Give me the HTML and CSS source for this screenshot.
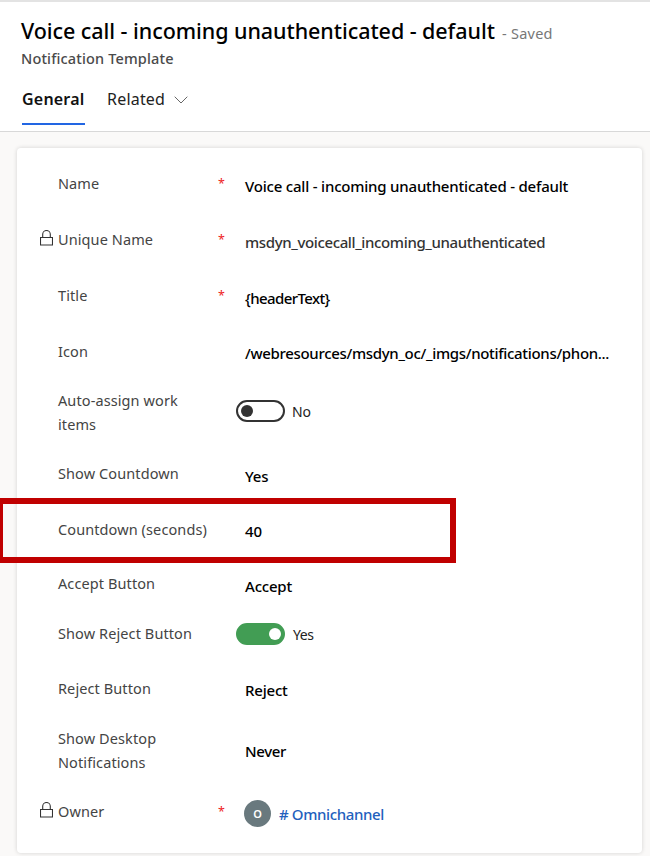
FILE: index.html
```html
<!DOCTYPE html>
<html lang="en">
<head>
<meta charset="utf-8">
<title>Notification Template</title>
<link rel="stylesheet" href="styles.css">
</head>
<body>
<header class="header">
  <div class="title-line"><h1 class="title">Voice call - incoming unauthenticated - default</h1><span class="saved">- Saved</span></div>
  <div class="subtitle">Notification Template</div>
  <nav class="tabs">
    <a class="tab active">General</a>
    <a class="tab related">Related</a>
    <svg class="chevron" width="14" height="8" viewBox="0 0 14 8"><path d="M.7.7 7 7 13.3.7" fill="none" stroke="#666" stroke-width="1"/></svg>
  </nav>
</header>
<main class="card">
  <div class="row"><span class="lock"></span><span class="label">Name</span><span class="req">*</span><span class="value v-name">Voice call - incoming unauthenticated - default</span></div>
  <div class="row"><span class="lock"><svg width="13" height="17" viewBox="0 0 13 17"><path d="M.5 7.5h12v7.5H.5zM2.7 7.5V4.3a3.8 3.8 0 0 1 7.6 0v3.2" fill="none" stroke="#333" stroke-width="1.1"/></svg></span><span class="label">Unique Name</span><span class="req">*</span><span class="value readonly">msdyn_voicecall_incoming_unauthenticated</span></div>
  <div class="row"><span class="lock"></span><span class="label">Title</span><span class="req">*</span><span class="value v-title">{headerText}</span></div>
  <div class="row r-icon"><span class="lock"></span><span class="label">Icon</span><span class="req"></span><span class="value v-icon">/webresources/msdyn_oc/_imgs/notifications/phon...</span></div>
  <div class="row r-auto"><span class="lock"></span><span class="label">Auto-assign work items</span><span class="req"></span><span class="toggle"><i class="knob"></i></span><span class="state">No</span></div>
  <div class="row"><span class="lock"></span><span class="label">Show Countdown</span><span class="req"></span><span class="value">Yes</span></div>
  <div class="row r-count"><span class="lock"></span><span class="label">Countdown (seconds)</span><span class="req"></span><span class="value">40</span><div class="highlight"></div></div>
  <div class="row r-accept"><span class="lock"></span><span class="label">Accept Button</span><span class="req"></span><span class="value">Accept</span></div>
  <div class="row r-show-reject"><span class="lock"></span><span class="label">Show Reject Button</span><span class="req"></span><span class="toggle on"><i class="knob"></i></span><span class="state">Yes</span></div>
  <div class="row r-reject"><span class="lock"></span><span class="label">Reject Button</span><span class="req"></span><span class="value">Reject</span></div>
  <div class="row r-desktop"><span class="lock"></span><span class="label">Show Desktop Notifications</span><span class="req"></span><span class="value v-never">Never</span></div>
  <div class="row r-owner"><span class="lock"><svg width="13" height="17" viewBox="0 0 13 17"><path d="M.5 7.5h12v7.5H.5zM2.7 7.5V4.3a3.8 3.8 0 0 1 7.6 0v3.2" fill="none" stroke="#333" stroke-width="1.1"/></svg></span><span class="label">Owner</span><span class="req">*</span><span class="avatar">O</span><a class="owner"># Omnichannel</a></div>
</main>
</body>
</html>
```

FILE: styles.css
```css
* { box-sizing: border-box; }
body { margin: 0; height: 856px; overflow: hidden; background: #faf9f8; font-family: "Noto Sans", "Open Sans", sans-serif; color: #000; }
.header { height: 132px; background: #fff; border-top: 2px solid #e3e3e3; border-bottom: 1px solid #d8d8d8; padding: 14px 0 0 22px; white-space: nowrap; }
.title-line { display: flex; align-items: baseline; height: 32px; line-height: 32px; margin-top: -1px; }
.title { margin: 0 0 0 -1px; font-size: 21.5px; font-weight: 500; width: 481px; letter-spacing: -.06px; }
.saved { font-size: 14.5px; letter-spacing: .25px; color: #777; }
.subtitle { margin: 1px 0 0 -1px; font-size: 14.5px; letter-spacing: .15px; line-height: 20px; font-weight: 500; color: #4a4a4a; }
.tabs { display: flex; height: 57px; padding-top: 19px; }
.tab { font-size: 16px; line-height: 24px; height: 38px; color: #222; letter-spacing: .2px; }
.active { width: 63px; font-weight: 600; color: #111; border-bottom: 2px solid #2266e3; }
.related { margin-left: 22px; width: 67px; }
.chevron { margin-top: 9px; }
.card { margin: 16px 8px 0 17px; height: 705px; padding: 8px 0 0 23px; background: #fff; border-radius: 4px; box-shadow: 0 0 4px rgba(0,0,0,.16); }
.row { display: flex; align-items: center; height: 56px; position: relative; }
.lock { width: 18px; height: 21px; }
.label { width: 160px; padding-right: 8px; font-size: 14.5px; letter-spacing: .1px; line-height: 23.5px; color: #444; }
.req { width: 18px; font-size: 12.5px; color: #e22; line-height: 20px; }
.value { margin-left: 9px; padding-top: 3px; font-size: 15px; line-height: 22px; font-weight: 500; letter-spacing: -.2px; white-space: nowrap; }
.readonly { color: #333; letter-spacing: -.37px; }
.v-title { letter-spacing: -.6px; }
.v-icon { letter-spacing: -.32px; }
.value.v-never { padding-top: 1px; letter-spacing: -.35px; }
.r-icon, .r-count { height: 55px; }
.r-auto { height: 67px; }
.r-accept { height: 54px; }
.r-show-reject { height: 46px; }
.r-reject { height: 63px; }
.r-desktop { height: 61px; }
.r-owner { height: 62px; }
.toggle { width: 49px; height: 22px; margin-top: -4px; border: 2px solid #333; border-radius: 11px; display: flex; align-items: center; padding: 0 3px; }
.knob { width: 12px; height: 12px; border-radius: 50%; background: #333; }
.on { background: #429d54; border-color: #429d54; justify-content: flex-end; margin-top: -1px; padding-right: 2px; }
.on .knob { background: #fff; }
.state { margin-left: 7px; font-size: 14px; letter-spacing: -.2px; margin-top: -2px; color: #222; }
.on + .state { margin-left: 8px; margin-top: 1px; letter-spacing: -.4px; }
.highlight { position: absolute; left: -40px; top: -4px; width: 456px; height: 65px; border: 6px solid #c00000; border-left-width: 3px; }
.avatar { width: 27px; height: 27px; margin: 3px 8px 0; border-radius: 50%; background: #69797e; color: #fff; font-size: 11px; font-weight: 600; text-align: center; line-height: 27px; }
.owner { padding-top: 3px; font-size: 15px; font-weight: 500; letter-spacing: -.38px; color: #2260bd; }
```
